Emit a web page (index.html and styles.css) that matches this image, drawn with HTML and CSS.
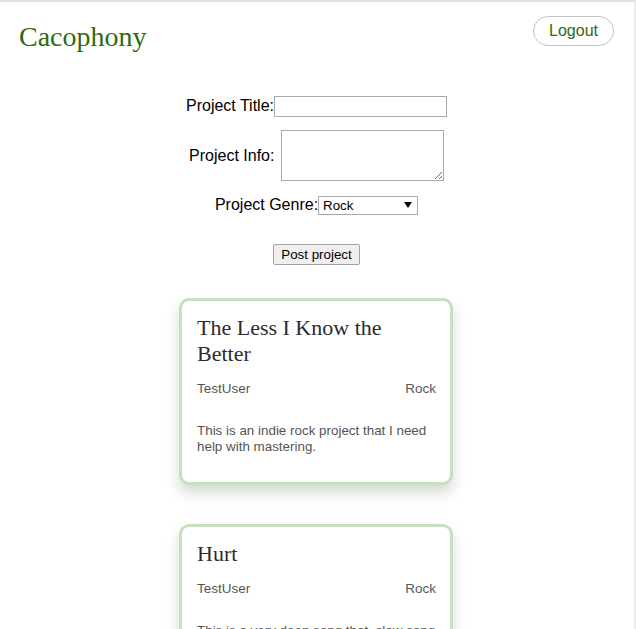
FILE: index.html
```html
<!DOCTYPE html>
<html>
<head>
<meta charset="utf-8">
<link rel="stylesheet" href="styles.css">
</head>
<body>
<div class="page">
  <header class="top">
    <h1 class="brand">Cacophony</h1>
    <button class="logout">Logout</button>
  </header>
  <form class="post-form">
    <div class="row"><label>Project Title:</label><input type="text" class="inp"></div>
    <div class="row row-info"><label>Project Info: </label><textarea class="ta"></textarea></div>
    <div class="row row-genre"><label>Project Genre:</label><select class="sel"><option>Rock</option></select></div>
    <div class="row row-btn"><button type="button" class="post">Post project</button></div>
  </form>
  <main class="list">
    <article class="card">
      <h2 class="card-title">The Less I Know the Better</h2>
      <div class="meta"><span>TestUser</span><span>Rock</span></div>
      <p class="desc">This is an indie rock project that I need help with mastering.</p>
    </article>
    <article class="card">
      <h2 class="card-title">Hurt</h2>
      <div class="meta"><span>TestUser</span><span>Rock</span></div>
      <p class="desc">This is a very deep song that, slow song that needs a lot of help.</p>
    </article>
  </main>
</div>
</body>
</html>
```
FILE: styles.css
```css
html, body {
  margin: 0;
  padding: 0;
  background: #fff;
  overflow: hidden;
}
body {
  font-family: "Liberation Sans", Arial, sans-serif;
  color: #000;
}
.page {
  border-top: 2px solid #e3e3e3;
  border-right: 2px solid #ececec;
  height: 627px;
  overflow: hidden;
}
.top {
  display: flex;
  justify-content: space-between;
  align-items: flex-start;
  padding: 14px 20px 0 19px;
  height: 64px;
  box-sizing: border-box;
}
.brand {
  margin: 6px 0 0 0;
  font-family: "Liberation Serif", "DejaVu Serif", serif;
  font-weight: normal;
  font-size: 28px;
  line-height: 30px;
  color: #2d6b12;
}
.logout {
  font-family: "Liberation Sans", Arial, sans-serif;
  font-size: 16px;
  color: #2d6b12;
  background: #fff;
  border: 1px solid #c4c4c4;
  border-radius: 15px;
  width: 81px;
  height: 30px;
  padding: 0;
  line-height: 26px;
}
.post-form {
  display: flex;
  flex-direction: column;
  align-items: center;
  margin-top: 30px;
  padding-right: 1px;
}
.row {
  display: flex;
  align-items: center;
  font-size: 16px;
  height: 20px;
}
.row label { white-space: pre; }
.row-info {
  height: 51px;
  margin-top: 14px;
}
.row-genre { margin-top: 14px; }
.inp {
  box-sizing: border-box;
  width: 173px;
  height: 21px;
  border: 1px solid #a9a9a9;
  margin: 0;
  padding: 0;
}
.ta {
  box-sizing: border-box;
  width: 163px;
  height: 51px;
  border: 1px solid #a9a9a9;
  margin: 0 0 0 2px;
  padding: 2px;
  resize: vertical;
}
.sel {
  box-sizing: border-box;
  appearance: none;
  -webkit-appearance: none;
  width: 100px;
  height: 19px;
  border: 1px solid #a9a9a9;
  border-radius: 0;
  background: #fff url("data:image/svg+xml;utf8,<svg xmlns='http://www.w3.org/2000/svg' width='8' height='6'><path d='M0 0h8L4 6z' fill='black'/></svg>") no-repeat right 5px center;
  font-family: "Liberation Sans", Arial, sans-serif;
  font-size: 13.33px;
  padding: 0 0 0 4px;
  margin: 0;
  color: #000;
}
.row-btn {
  margin-top: 29px;
  height: 21px;
}
.post {
  box-sizing: border-box;
  font-family: "Liberation Sans", Arial, sans-serif;
  font-size: 13.33px;
  width: 87px;
  height: 21px;
  border: 1px solid #a3a3a3;
  background: #efefef;
  padding: 0;
  border-radius: 2px;
  color: #000;
}
.list {
  display: flex;
  flex-direction: column;
  align-items: center;
  gap: 39px;
  margin-top: 33px;
  padding-right: 2px;
}
.card {
  box-sizing: border-box;
  width: 274px;
  border: 3px solid #c6e0c0;
  border-radius: 10px;
  padding: 14px 14px 27px 15px;
  box-shadow: 0 8px 14px rgba(60, 90, 60, 0.22);
  background: #fff;
}
.card-title {
  margin: 0;
  font-family: "Liberation Serif", "DejaVu Serif", serif;
  font-weight: normal;
  font-size: 22px;
  line-height: 26px;
  color: #2b2b33;
}
.meta {
  display: flex;
  justify-content: space-between;
  margin-top: 14px;
  font-size: 13.5px;
  line-height: 16px;
  color: #555;
}
.desc {
  margin: 26px 0 0 0;
  font-size: 13.4px;
  line-height: 16px;
  color: #555;
}
```
